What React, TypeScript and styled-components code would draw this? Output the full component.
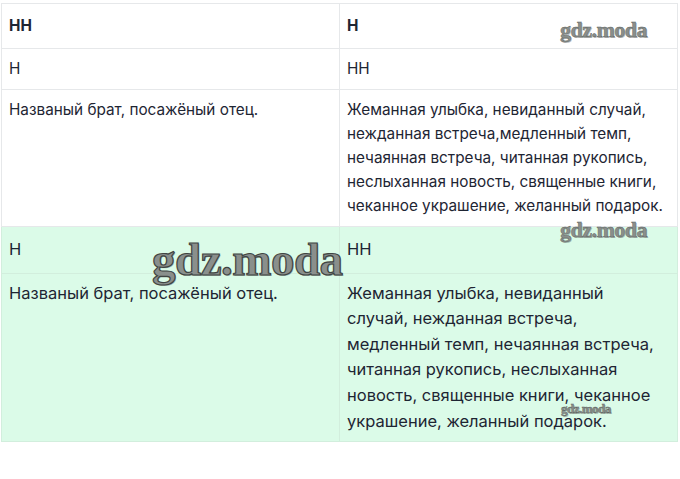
import React from 'react';
import styled, { createGlobalStyle } from 'styled-components';

const GlobalStyle = createGlobalStyle`
  html, body {
    margin: 0;
    padding: 0;
    background: #ffffff;
  }
  body {
    font-family: Inter, "Noto Sans", sans-serif;
    color: #1e2533;
  }
`;

const Page = styled('div')`
  position: relative;
  width: 680px;
  height: 479px;
  padding: 3px 2px 0 1px;
  box-sizing: border-box;
  overflow: hidden;
`;

const Table = styled('table')`
  width: 677px;
  border-collapse: collapse;
  table-layout: fixed;
`;

const Row = styled('tr')<{ $green?: boolean; $big?: boolean }>`
  background: ${({ $green }) => ($green ? '#dbfbe8' : '#ffffff')};
  font-size: ${({ $big }) => ($big ? '16.5px' : '15.3px')};
  line-height: ${({ $big }) => ($big ? '25.6px' : '24px')};
`;

const Cell = styled('td')<{ $pad?: number; $head?: boolean; $right?: number }>`
  border: 1px solid #e6e8ea;
  padding: ${({ $pad = 8, $right = 6 }) => `${$pad}px ${$right}px ${$pad}px 7px`};
  vertical-align: top;
  font-weight: ${({ $head }) => ($head ? 700 : 400)};
  color: #1e2533;
`;

const GreenCell = styled(Cell)`
  border-color: #d2eedd;
`;

const Mark = styled('span')<{ $size: number; $x: number; $y: number }>`
  position: absolute;
  left: ${({ $x }) => $x}px;
  top: ${({ $y }) => $y}px;
  font-family: "Liberation Serif", "DejaVu Serif", serif;
  font-size: ${({ $size }) => $size}px;
  font-weight: 700;
  line-height: 1;
  letter-spacing: -0.5px;
  color: #8a8f8c;
  -webkit-text-stroke: ${({ $size }) => ($size > 30 ? '1.2px #3f4442' : '0.4px #5a5f5c')};
  text-shadow: 1px 1px 0 rgba(60, 60, 60, 0.35);
  pointer-events: none;
  white-space: nowrap;
`;

const leftText = 'Названый брат, посажёный отец.';
const rightText =
  'Жеманная улыбка, невиданный случай, нежданная встреча,медленный темп, нечаянная встреча, читанная рукопись, неслыханная новость, священные книги, чеканное украшение, желанный подарок.';
const rightText2 =
  'Жеманная улыбка, невиданный случай, нежданная встреча, медленный темп, нечаянная встреча, читанная рукопись, неслыханная новость, священные книги, чеканное украшение, желанный подарок.';

export default function App() {
  return (
    <Page>
      <GlobalStyle />
      <Table>
        <tbody>
          <Row>
            <Cell $head $pad={10}>НН</Cell>
            <Cell $head $pad={10}>Н</Cell>
          </Row>
          <Row>
            <Cell>Н</Cell>
            <Cell>НН</Cell>
          </Row>
          <Row>
            <Cell>{leftText}</Cell>
            <Cell $right={4}>{rightText}</Cell>
          </Row>
          <Row $green $big>
            <GreenCell $pad={10}>Н</GreenCell>
            <GreenCell $pad={10}>НН</GreenCell>
          </Row>
          <Row $green $big>
            <GreenCell $pad={7}>{leftText}</GreenCell>
            <GreenCell $pad={7} $right={12}>{rightText2}</GreenCell>
          </Row>
        </tbody>
      </Table>
      <Mark $size={22} $x={560} $y={19}>gdz.moda</Mark>
      <Mark $size={22} $x={560} $y={219}>gdz.moda</Mark>
      <Mark $size={47} $x={152} $y={236}>gdz.moda</Mark>
      <Mark $size={13} $x={561} $y={402}>gdz.moda</Mark>
    </Page>
  );
}
